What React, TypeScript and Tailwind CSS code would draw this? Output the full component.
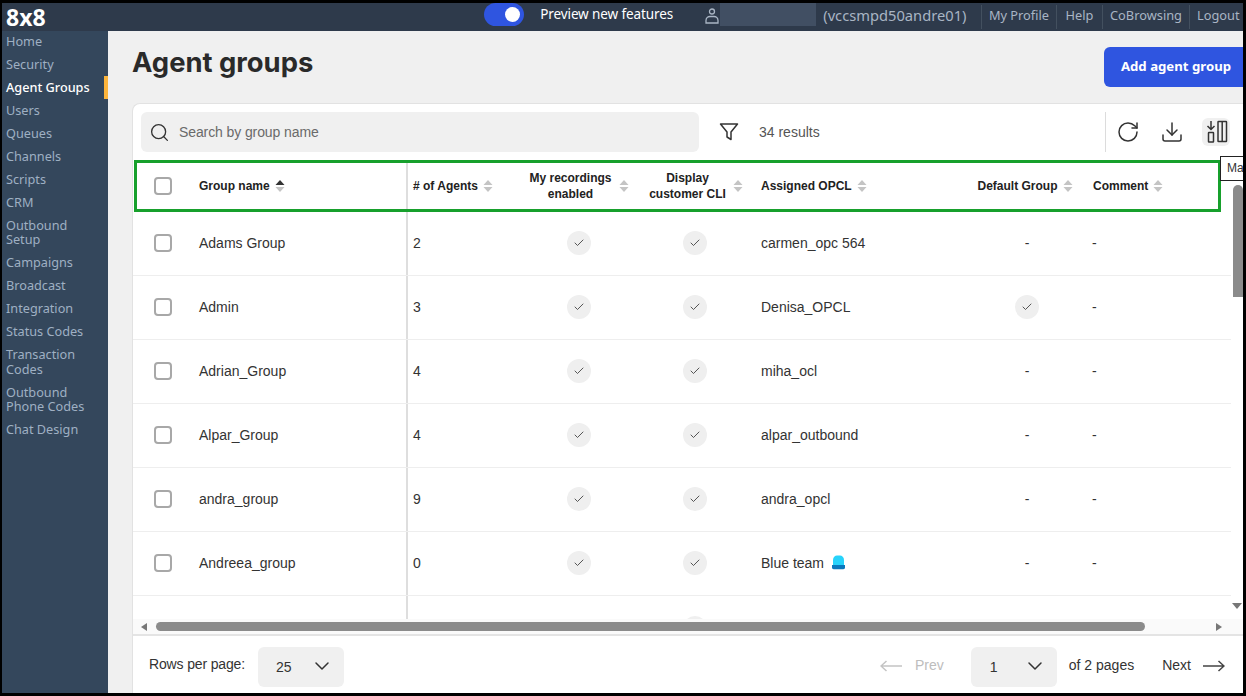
import { Check, ChevronDown, Download, RotateCw, Search } from 'lucide-react';

const navItems = [
  { label: ['Home'] },
  { label: ['Security'] },
  { label: ['Agent Groups'], active: true },
  { label: ['Users'] },
  { label: ['Queues'] },
  { label: ['Channels'] },
  { label: ['Scripts'] },
  { label: ['CRM'] },
  { label: ['Outbound', 'Setup'] },
  { label: ['Campaigns'] },
  { label: ['Broadcast'] },
  { label: ['Integration'] },
  { label: ['Status Codes'] },
  { label: ['Transaction', 'Codes'] },
  { label: ['Outbound', 'Phone Codes'] },
  { label: ['Chat Design'] },
];

const rows = [
  { name: 'Adams Group', agents: '2', opcl: 'carmen_opc 564' },
  { name: 'Admin', agents: '3', opcl: 'Denisa_OPCL', isDefault: true },
  { name: 'Adrian_Group', agents: '4', opcl: 'miha_ocl' },
  { name: 'Alpar_Group', agents: '4', opcl: 'alpar_outbound' },
  { name: 'andra_group', agents: '9', opcl: 'andra_opcl' },
  { name: 'Andreea_group', agents: '0', opcl: 'Blue team', siren: true },
];

const rowCols = 'grid grid-cols-[66px_207px_114px_117px_116px_207px_125px_1fr] items-center';
const headCols = 'grid grid-cols-[62px_207px_114px_117px_116px_207px_125px_1fr] items-center';

function SortIcon({ active }: { active?: boolean }) {
  return (
    <svg width="10" height="14" viewBox="0 0 10 14" className="shrink-0" aria-hidden="true">
      <path d="M5 1 9.500 6H.5z" fill={active ? '#333333' : '#c4c4c4'} />
      <path d="M5 13 .5 8h9z" fill="#c4c4c4" />
    </svg>
  );
}

function CheckBox() {
  return <span className="block w-[18px] h-[18px] rounded-[4px] border-2 border-[#a8a8a8] bg-white" />;
}

function CheckBadge() {
  return (
    <span className="flex w-6 h-6 items-center justify-center rounded-full bg-[#efefef]">
      <Check className="w-3 h-3 text-[#444]" strokeWidth={1.8} aria-hidden="true" />
    </span>
  );
}

function Siren() {
  return (
    <svg width="15" height="15" viewBox="0 0 15 15" className="ml-[7px] shrink-0" aria-hidden="true">
      <path d="M2 10V5C2 2 4 .5 6 .5h3c2 0 4 1.500 4 4.500v5z" fill="#27d3fb" />
      <path d="M1 10h13v2.500c0 1-.7 1.700-1.700 1.700H2.700C1.700 14.200 1 13.500 1 12.500z" fill="#0a78bd" />
    </svg>
  );
}

function ColumnsIcon() {
  return (
    <svg width="24" height="24" viewBox="0 0 24 24" fill="none" stroke="#333" strokeWidth="1.500" aria-hidden="true">
      <rect x="14" y="1.500" width="8.500" height="20" rx="0.500" />
      <path d="M18.200 1.500v20" />
      <rect x="4.500" y="12.500" width="5" height="9.500" rx="0.500" />
      <path d="M7 1v8M3.500 6 7 9.500 10.500 6" />
    </svg>
  );
}

function PersonIcon() {
  return (
    <svg width="14" height="16" viewBox="0 0 14 16" fill="none" stroke="#a9b5c4" strokeWidth="1.300" className="shrink-0" aria-hidden="true">
      <circle cx="7" cy="3.500" r="2.500" />
      <path d="M1 15v-2.500C1 10 3 8.500 5 8.500h4c2 0 4 1.500 4 4V15z" />
    </svg>
  );
}

function ArrowIcon({ left, color }: { left?: boolean; color: string }) {
  return (
    <svg width="22" height="12" viewBox="0 0 22 12" fill="none" stroke={color} strokeWidth="1.500" aria-hidden="true">
      {left ? <path d="M22 6H1M6.500 1 1 6l5.500 5" /> : <path d="M0 6h21M15.500 1 21 6l-5.500 5" />}
    </svg>
  );
}

function SelectBox({ value, className }: { value: string; className: string }) {
  return (
    <div className={`flex h-10 w-[86px] items-center justify-between rounded-md bg-[#f0f0f0] text-[#333] ${className}`}>
      <span className="text-sm">{value}</span>
      <ChevronDown className="mb-[2px] w-6 h-6 text-[#333]" strokeWidth={1.5} aria-hidden="true" />
    </div>
  );
}

function TopBar() {
  return (
    <header className="flex h-[28px] shrink-0 items-center bg-[#2e3a4b] font-['Noto_Sans',sans-serif]">
      <span className="ml-[4px] w-[479px] text-[23px] leading-none font-bold text-white">8x8</span>
      <div className="flex h-[23px] w-10 items-center justify-end self-start rounded-[12px] bg-[#2f55e0] pr-[4px]">
        <span className="block h-[15px] w-[15px] rounded-full bg-white" />
      </div>
      <span className="ml-4 mb-[6px] w-[132px] whitespace-nowrap text-[13.500px] tracking-[-0.1px] text-white">Preview new features</span>
      <span className="ml-[33px] mb-[2px]"><PersonIcon /></span>
      <span className="ml-[1px] h-[23px] w-[96px] shrink-0 self-start bg-[#414f63]" />
      <span className="ml-[7px] mb-[3px] w-[144px] whitespace-nowrap text-[14.700px] text-[#a9b5c4]">(vccsmpd50andre01)</span>
      <nav className="ml-[14px] flex h-[24px] items-center text-[12.800px] text-[#a9b5c4]">
        <a className="flex h-full w-[75px] items-center justify-center border-l border-[#43505f] pb-[3px] whitespace-nowrap">My Profile</a>
        <a className="flex h-full w-[46px] items-center justify-center border-l border-[#43505f] pb-[3px]">Help</a>
        <a className="flex h-full w-[87px] items-center justify-center border-l border-[#43505f] pb-[3px]">CoBrowsing</a>
        <a className="flex h-full w-[54px] items-center border-l border-[#43505f] pb-[3px] pl-[7px]">Logout</a>
      </nav>
    </header>
  );
}

function Sidebar() {
  return (
    <aside className="w-[106px] shrink-0 bg-[#34475c] font-['Noto_Sans',sans-serif] text-[12.700px] leading-[14.500px] text-[#9fb0c3]">
      <div className="-mt-[1.500px]">
        {navItems.map((item) => (
          <div
            key={item.label.join(' ')}
            className={`py-[4.250px] pl-[4px] ${item.active ? 'border-r-[4px] border-[#fdb53c] font-medium text-white' : ''}`}
          >
            {item.label.map((line) => (
              <div key={line}>{line}</div>
            ))}
          </div>
        ))}
      </div>
    </aside>
  );
}

function TableHeader() {
  return (
    <div className={`${headCols} ml-[1px] w-[1087px] h-[52px] border-[3px] border-[#17a02c] text-xs font-bold leading-4 text-[#222]`}>
      <div className="pl-[17px]"><CheckBox /></div>
      <div className="flex items-center gap-[5px]"><span>Group name</span><SortIcon active /></div>
      <div className="flex h-full items-center gap-[5px] border-l-2 border-[#dedede] pl-[5px]"><span># of Agents</span><SortIcon /></div>
      <div className="flex items-center justify-center gap-[7px] pl-[1px]"><span className="text-center">My recordings<br />enabled</span><SortIcon /></div>
      <div className="flex items-center justify-center gap-[7px] pl-[2px]"><span className="text-center">Display<br />customer CLI</span><SortIcon /></div>
      <div className="flex items-center gap-[5px] pl-2"><span>Assigned OPCL</span><SortIcon /></div>
      <div className="flex items-center justify-center gap-[5px] pl-[5px]"><span>Default Group</span><SortIcon /></div>
      <div className="flex items-center gap-[5px] pl-2"><span>Comment</span><SortIcon /></div>
    </div>
  );
}

function TableRows() {
  return (
    <div className="h-[407px] overflow-hidden pr-[12px] text-sm text-[#333]">
      {rows.map((row) => (
        <div key={row.name} className={`${rowCols} h-16 border-b border-[#eeeeee]`}>
          <div className="pb-[2px] pl-[21px]"><CheckBox /></div>
          <div className="pb-[2px]">{row.name}</div>
          <div className="flex h-full items-center border-l-2 border-[#dedede] pb-[2px] pl-[5px]">{row.agents}</div>
          <div className="flex justify-center pb-[2px]"><CheckBadge /></div>
          <div className="flex justify-center pb-[2px]"><CheckBadge /></div>
          <div className="flex items-center pb-[2px] pl-2">{row.opcl}{row.siren && <Siren />}</div>
          <div className="flex justify-center pb-[2px] pl-[9px]">{row.isDefault ? <CheckBadge /> : '-'}</div>
          <div className="pb-[2px] pl-[7px]">-</div>
        </div>
      ))}
      <div className={`${rowCols} h-16`}>
        <div />
        <div />
        <div className="h-full border-l-2 border-[#dedede]" />
        <div />
        <div className="flex justify-center"><CheckBadge /></div>
      </div>
    </div>
  );
}

function Pagination() {
  return (
    <footer className="flex h-[59px] items-center border-t-2 border-[#e4e4e4] pt-[4px] text-sm text-[#333]">
      <span className="ml-[16px] mb-[5px] w-[109px] tracking-[-0.15px]">Rows per page:</span>
      <SelectBox value="25" className="pl-[18px] pr-[10px]" />
      <span className="ml-[536px] mb-[2px]"><ArrowIcon left color="#c4c4c4" /></span>
      <span className="ml-[13px] mb-[3px] text-[#bdbdbd]">Prev</span>
      <SelectBox value="1" className="ml-[27px] pl-[19px] pr-[10px]" />
      <span className="ml-3 mb-[3px] whitespace-nowrap">of 2 pages</span>
      <span className="ml-7 mb-[3px]">Next</span>
      <span className="ml-[12px] mb-[2px]"><ArrowIcon color="#444" /></span>
    </footer>
  );
}

export default function App() {
  return (
    <div className="flex h-[696px] w-[1246px] flex-col overflow-hidden bg-black pt-[3px] pr-[3px] pb-[3px] pl-[2px] font-['Liberation_Sans',sans-serif]">
      <TopBar />
      <div className="flex min-h-0 flex-1">
        <Sidebar />
        <main className="relative min-w-0 flex-1 overflow-hidden bg-[#f0f0f0] pl-6">
          <div className="flex h-[72px] items-start justify-between">
            <h1 className="mt-[13px] font-['Inter',sans-serif] text-[27.400px] leading-9 font-bold text-[#2a2a2a]">Agent groups</h1>
            <button className="mt-4 h-10 w-[139px] rounded-l-md bg-[#2f55e0] pl-[5px] font-['Noto_Sans',sans-serif] text-[13.200px] font-bold text-white">Add agent group</button>
          </div>

          <section className="rounded-tl-lg border-t border-l border-[#e2e2e2] bg-white">
            {/* Toolbar */}
            <div className="flex h-[48px] items-end pl-2">
              <div className="flex h-10 w-[558px] items-center gap-[9px] rounded-md bg-[#f0f0f0] pl-[8px] text-sm tracking-[-0.1px] text-[#6a6a6a]">
                <Search className="h-[21px] w-[21px] text-[#333]" strokeWidth={1.500} aria-hidden="true" />
                Search by group name
              </div>
              <svg width="20" height="20" viewBox="0 0 20 20" fill="none" stroke="#333" strokeWidth="1.500" className="mb-[10px] ml-5" aria-hidden="true">
                <path d="M1.500 2h17l-6.500 8v7.500l-4-2.500v-5z" strokeLinejoin="round" />
              </svg>
              <span className="mb-[10px] ml-5 text-sm text-[#555]">34 results</span>
              <div className="ml-auto flex h-10 items-center">
                <span className="h-10 w-px bg-[#dcdcdc]" />
                <RotateCw className="ml-[10px] h-6 w-6 text-[#333]" strokeWidth={1.500} aria-hidden="true" />
                <Download className="ml-5 h-6 w-6 text-[#333]" strokeWidth={1.500} aria-hidden="true" />
                <span className="mr-[13px] ml-[18px] flex h-7 w-7 items-center justify-center rounded-md bg-[#f0f0f0]"><ColumnsIcon /></span>
              </div>
            </div>

            <div className="pt-[8px]">
              <TableHeader />
              <TableRows />
            </div>

            {/* Horizontal scrollbar */}
            <div className="flex h-[15px] items-center bg-[#fafafa] pl-2">
              <span className="border-y-[4px] border-r-[6px] border-y-transparent border-r-[#777]" />
              <span className="ml-[9px] h-[9px] w-[989px] rounded-full bg-[#8b8b8b]" />
              <span className="ml-[71px] border-y-[4px] border-l-[6px] border-y-transparent border-l-[#777]" />
            </div>
            <Pagination />
          </section>

          {/* Column tooltip, cut off by the window edge */}
          <div className="absolute top-[125px] right-0 h-[25px] w-[23px] overflow-hidden border border-r-0 border-[#222] bg-white pl-[6px] text-xs leading-[23px] text-[#333]">Ma</div>

          {/* Vertical scrollbar */}
          <div className="absolute top-[154px] right-0 h-[112px] w-[10px] rounded-t-full bg-[#8b8b8b]" />
          <span className="absolute top-[572px] right-[1px] border-x-[5px] border-t-[6px] border-x-transparent border-t-[#777]" />
        </main>
      </div>
    </div>
  );
}
